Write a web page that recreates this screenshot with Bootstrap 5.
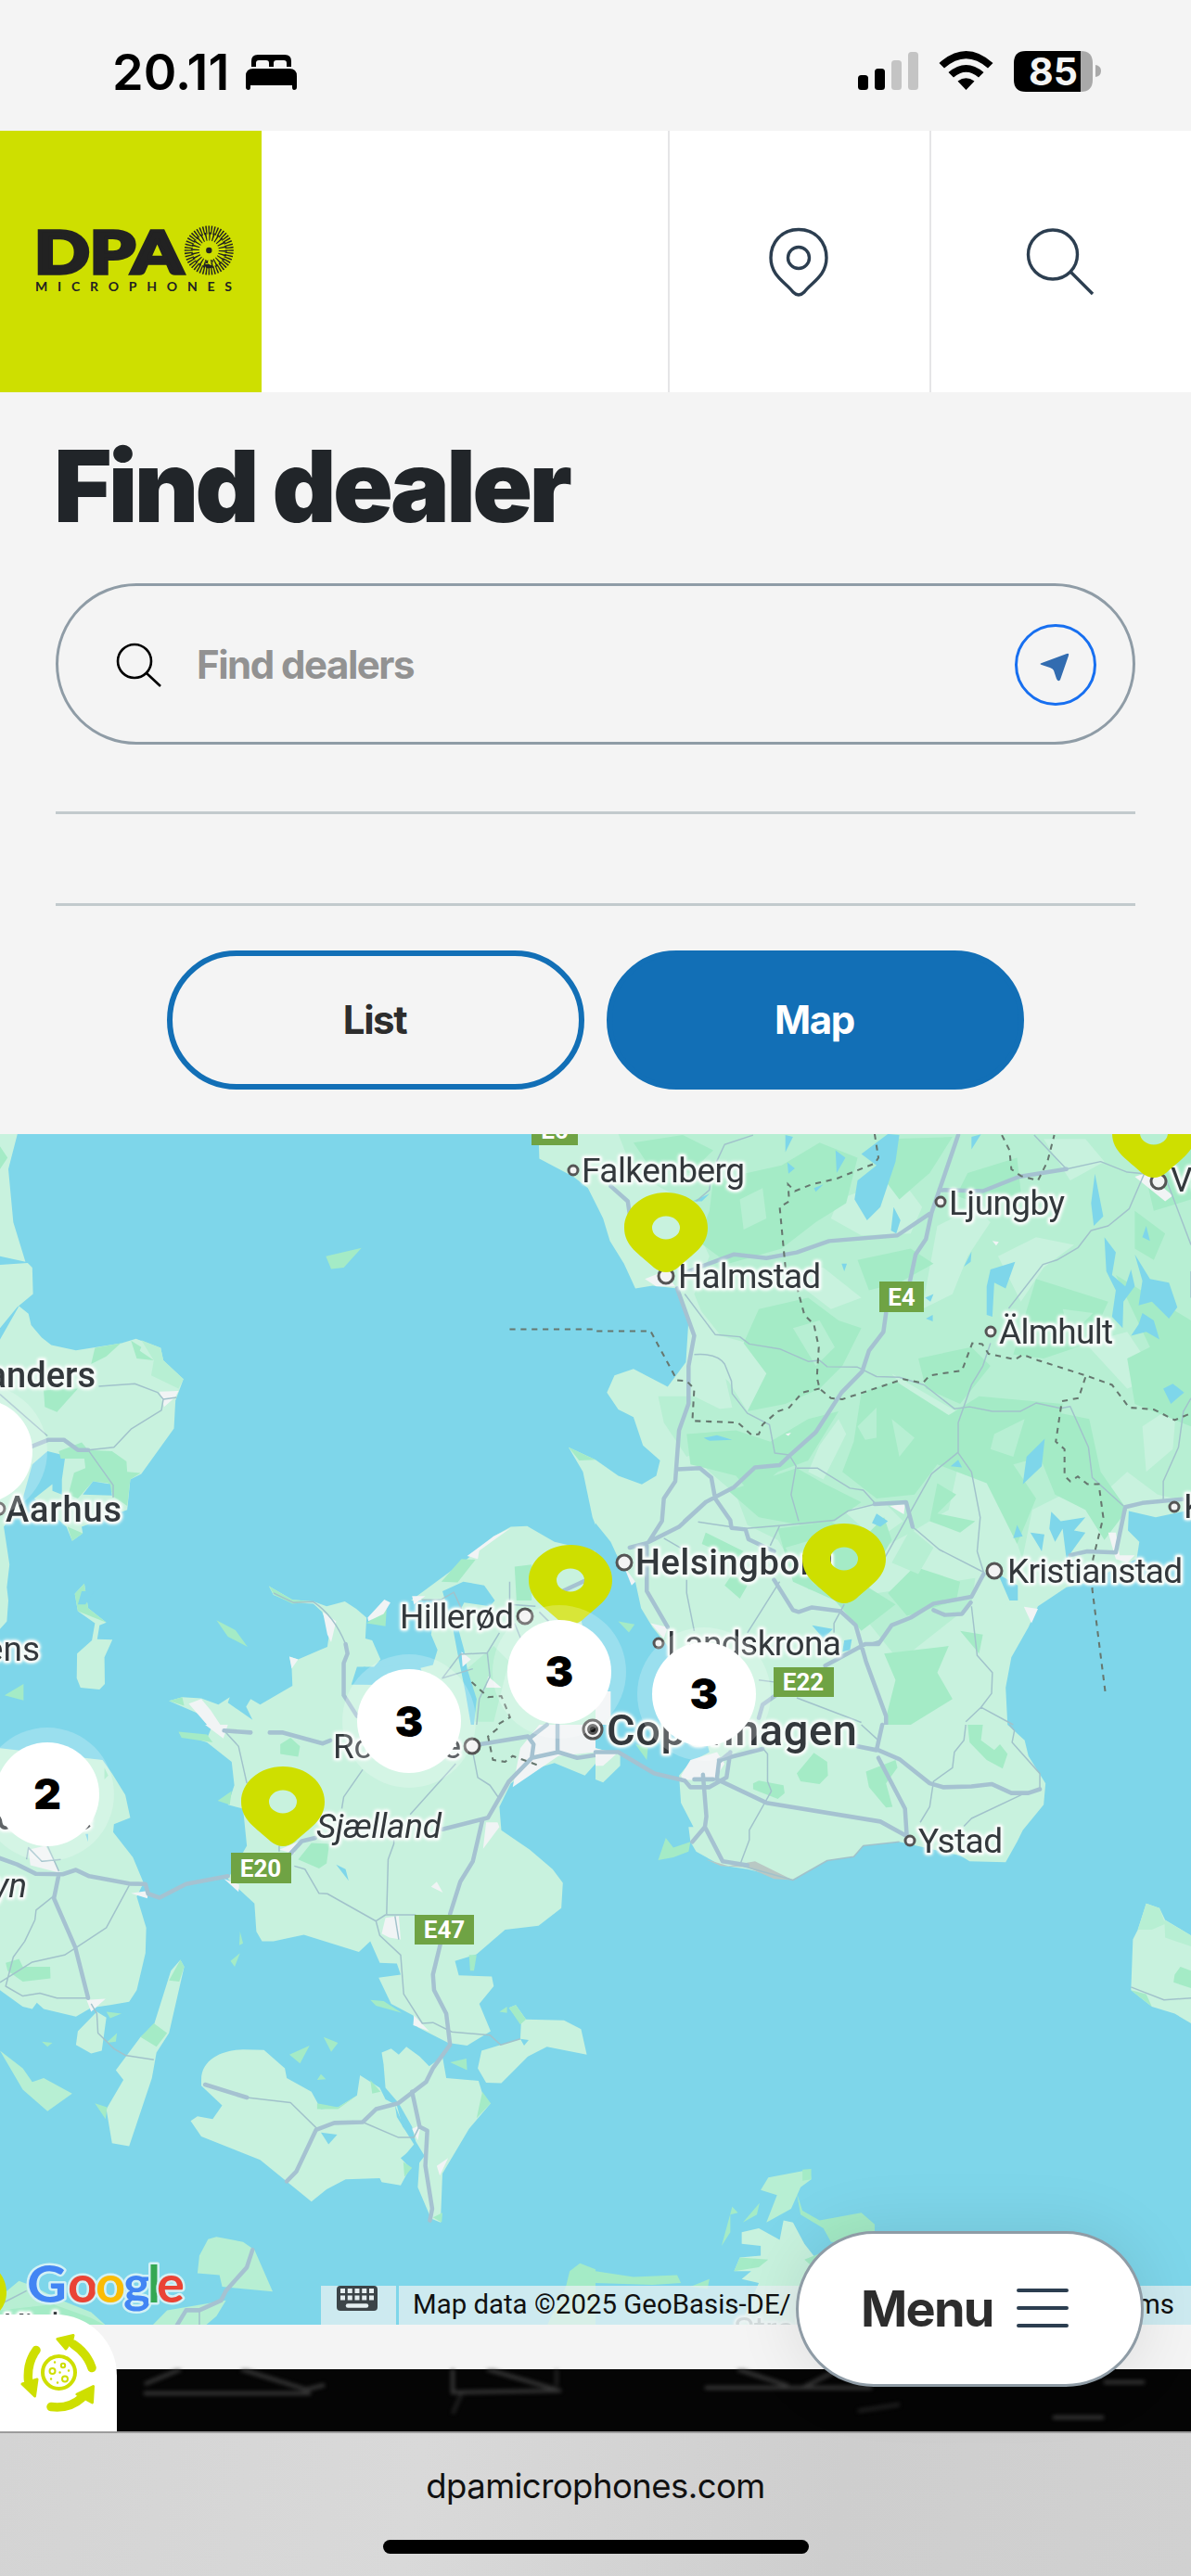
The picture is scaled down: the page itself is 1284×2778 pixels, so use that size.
<!DOCTYPE html>
<html lang="en">
<head>
<meta charset="utf-8">
<meta name="viewport" content="width=device-width, initial-scale=1">
<title>Find dealer</title>
<link href="https://cdn.jsdelivr.net/npm/bootstrap@5.3.0/dist/css/bootstrap.min.css" rel="stylesheet">
<style>
body{font-family:Inter,"Liberation Sans",sans-serif;background:#f4f4f4;width:1284px;overflow-x:hidden}
.screen{height:2778px;overflow:hidden}
.status{height:141px;padding:14px 96px 0 121px;color:#000}
.clock{font-size:54px;font-weight:600;letter-spacing:.1px;line-height:1}
.site-head{height:282px;background:#fff}
.brand{width:282px;background:#cedf00}
.head-cell{width:282px;border:0;border-left:2px solid #e5e5e7;background:#fff}
.dealer{height:800px;padding:0 60px}
.dealer h1{font-size:107px;font-weight:900;line-height:1;letter-spacing:-3.7px;color:#212529;margin:48px 0 0 -2px;height:158px}
.find-box{height:174px;border:3px solid #8f9ca6;padding:2px 39px 0 61px}
.find-box input{border:0;background:none;outline:0;font-size:42px;font-weight:700;letter-spacing:-1.5px;padding:0 0 2px;margin-left:38px;color:#333}
.find-box input::placeholder{color:#929292;opacity:1}
.locate{width:88px;height:88px;border:3px solid #176ff0;background:none}
.rule{height:3px;background:#c2cacd}
.toggle-btn{width:450px;height:150px;border:6px solid #126fb6;font-size:42px;font-weight:700;letter-spacing:-1.4px;color:#2d2d2d;padding:0 2px 2px 0}
.toggle-btn.on{background:#126fb6;color:#fff}
.map-wrap{height:1284px;background:#7ed6ea}
.map-wrap>svg{display:block}
.credit{left:346px;right:0;bottom:0;height:42px;font:29.4px/40px Roboto,sans-serif;color:#111}
.credit>div{background:rgba(232,240,242,.75)}
.menu-pill{left:858px;top:2406px;width:375px;height:168px;background:#fff;border:3px solid #8f9ca6;box-shadow:0 0 70px rgba(0,0,0,.1);padding:0 78px 2px 67px}
.menu-pill span{font-size:54px;font-weight:700;letter-spacing:-1.8px;color:#2d2d2d}
.recycle{left:0;top:2496px;width:126px;height:126px;background:#fff;border-top-right-radius:66px}
.gap-strip{height:48px}
.stage{height:67px;background:#050505}
.stage svg{display:block}
.browser-bar{height:156px;border-top:2px solid #9c9c9c;background:linear-gradient(100deg,#d4d4d4,#d9d9d9 35%,#cecece 70%,#d1d1d1)}
.browser-bar span{font-size:36.5px;line-height:46px;color:#111;margin-top:34px;letter-spacing:-.55px}
.home-bar{width:459px;height:15px;background:#000;margin-top:35px}
.land{fill:#c8f2de}.mid{fill:#b7efd3}.wood{fill:#a4ebc6}.lake{fill:#7ed6ea}.town{fill:#f1f4f5}
.hw{fill:none;stroke:#a5c2d1;stroke-width:11;stroke-linejoin:round;stroke-linecap:round}
.rd{fill:none;stroke:#a1c2cb;stroke-width:3.6;stroke-linejoin:round}
.bd{fill:none;stroke:#66776f;stroke-width:5;stroke-dasharray:15 14}
.lb{filter:drop-shadow(0 0 1.5px #f5fbf8) drop-shadow(0 0 1.5px #f5fbf8)}
.lb text{font-family:Roboto,sans-serif;font-size:37px;fill:#33383c;stroke:#f5fbf8;stroke-width:4px;paint-order:stroke;stroke-linejoin:round}
.lb .city{font-weight:500;font-size:38px}
.dots circle{fill:#f3f3f3;stroke:#555;stroke-width:3}
.shields rect{fill:#6fa344}
.shields text{font:700 26px Roboto,sans-serif;fill:#fff;text-anchor:middle}
.clusters text{font:900 46px Inter,sans-serif;fill:#000;text-anchor:middle}
</style>
</head>
<body>
<div class="screen position-relative d-flex flex-column">
  <header class="status d-flex align-items-center justify-content-between">
    <div class="d-flex align-items-center gap-3">
      <span class="clock">20.11</span>
      <svg width="56" height="38" viewBox="0 0 56 38" style="margin-left:2px"><path d="M6 13V7Q6 0 13 0H42Q49 0 49 7V13H44V9Q44 6 41 6H33Q30 6 30 9V13H25V9Q25 6 22 6H14Q11 6 11 9V13ZM8 15H47Q55 15 55 23V35Q55 38 52 38 50 38 50 35V33H5V35Q5 38 3 38 0 38 0 35V23Q0 15 8 15Z"/></svg>
    </div>
    <svg width="264" height="46" viewBox="924 54 264 46">
      <rect x="925" y="80" width="11" height="16" rx="3.500"/><rect x="943" y="73" width="11" height="23" rx="3.500"/>
      <rect x="961" y="64" width="11" height="32" rx="3.500" fill="#c4c4c4"/><rect x="979" y="55" width="11" height="41" rx="3.500" fill="#c4c4c4"/>
      <path d="M1012.500 67Q1041.500 41 1070.500 67L1065 72.500Q1041.500 52 1018 72.500ZM1022.500 77Q1041.500 61 1060.500 77L1055 82.500Q1041.500 71 1028 82.500ZM1032.500 86.500Q1041.500 80 1050.500 86.500L1041.500 96Z"/>
      <path d="M1106 54H1165V98H1106Q1093 98 1093 85V67Q1093 54 1106 54Z"/><path d="M1165 54Q1178 54 1178 67V85Q1178 98 1165 98Z" fill="#a9a9a9"/><path d="M1181 69Q1187 70 1187 75.500 1187 81 1181 82Z" fill="#a9a9a9"/>
      <text x="1135.500" y="91" text-anchor="middle" font-family="Inter,sans-serif" font-size="41" font-weight="700" fill="#f4f4f4">85</text>
    </svg>
  </header>

  <nav class="site-head d-flex">
    <a class="brand d-block" href="#">
      <svg width="282" height="282" viewBox="0 141 282 282" fill="#222">
        <text x="37" y="294.500" font-family="Lato,sans-serif" font-weight="900" font-size="63" textLength="160" lengthAdjust="spacingAndGlyphs" stroke="#222" stroke-width="3.600">DPA</text>
        <text x="38" y="314" font-family="Lato,sans-serif" font-weight="700" font-size="14" textLength="212">MICROPHONES</text>
        <circle cx="225.300" cy="270" r="3.200"/>
        <g fill="none" stroke="#222"><circle cx="225.300" cy="270" r="15" stroke-width="9" pathLength="24" stroke-dasharray=".36 .64"/><circle cx="225.300" cy="270" r="22" stroke-width="9" pathLength="48" stroke-dasharray=".48 .52" stroke-dashoffset=".25"/></g>
      </svg>
    </a>
    <div class="flex-grow-1"></div>
    <button class="head-cell p-0" aria-label="Find dealer"><svg width="280" height="282" viewBox="722 141 280 282" fill="none" stroke="#2c3e50" stroke-width="3.400"><path d="M861 247.500C842 247.500 831 262 831 278 831 298 848 305 855 315Q861 321 867 315C874 305 891 298 891 278 891 262 880 247.500 861 247.500Z"/><circle cx="861" cy="278" r="11.500"/></svg></button>
    <button class="head-cell p-0" aria-label="Search"><svg width="280" height="282" viewBox="1004 141 280 282" fill="none" stroke="#2c3e50" stroke-width="3.400"><circle cx="1135" cy="274.500" r="26.500"/><path d="M1154 293L1178 317"/></svg></button>
  </nav>

  <main>
    <section class="dealer d-flex flex-column">
      <h1>Find dealer</h1>
      <form class="find-box rounded-pill d-flex align-items-center">
        <svg width="50" height="50" viewBox="124 693 50 50" fill="none" stroke="#000" stroke-width="2.600"><circle cx="145" cy="714" r="18"/><path d="M158 727L173 741"/></svg>
        <input class="flex-grow-1" type="text" placeholder="Find dealers">
        <button type="button" class="locate rounded-circle p-0 flex-shrink-0" aria-label="Use my location"><svg width="82" height="82" viewBox="1097 676 82 82"><path d="M1123 715L1150 705Q1153 704 1152 707L1143 733Q1141 736 1139 732L1136 723Q1135 721 1132 720L1123 717Q1120 716 1123 715Z" fill="#326cb0"/></svg></button>
      </form>
      <div class="rule" style="margin-top:72px"></div>
      <div class="rule" style="margin-top:96px"></div>
      <div class="d-flex justify-content-center gap-4" style="margin-top:48px">
        <button class="toggle-btn rounded-pill bg-transparent">List</button>
        <button class="toggle-btn on rounded-pill">Map</button>
      </div>
    </section>

    <section class="map-wrap position-relative">
      <svg width="1284" height="1284" viewBox="0 0 1284 1284">
        <!-- north-west: Jutland coast, Djursland, north Zealand -->
        <g transform="translate(0,-3) scale(.40944,.40816)">
          <path class="land" d="M0 7H46L22 100 35 240 67 345 0 330ZM0 353L73 348 85 360 87 430 45 465 0 520ZM0 550L50 462 75 482 82 512 110 545 135 565 200 579 320 560 358 548 423 572 430 605 483 655 462 712 458 785 372 905 343 920 335 1000 215 1045 218 1062 190 1082 175 1045 90 970 138 932 138 950 163 960V920L172 857 125 845 85 880 60 970 0 985ZM0 960L60 975 10 1045 25 1145 18 1205 22 1240 18 1295 0 1315ZM222 1195L197 1222 205 1268 250 1300 242 1345 203 1380 202 1445 212 1470 262 1475 276 1460 275 1390 296 1343 256 1342 262 1305 280 1298 232 1260ZM1418 7H1568V190L1548 150 1510 120 1420 72ZM1497 835L1568 868V1040L1560 1020 1535 900Z"/>
          <path class="land" d="M560 1568L525 1540 445 1505 480 1495 530 1498 575 1515 605 1495 600 1510 665 1555 648 1520 660 1500 685 1515 770 1465 768 1415 762 1388 785 1395 862 1362 868 1320 848 1270 825 1248 770 1245 720 1225 708 1202 770 1238 825 1242 860 1255 908 1242 938 1262 965 1285 962 1340 980 1345 1002 1395 985 1415 958 1415 930 1460 985 1462 1100 1420 1140 1410 1152 1370 1135 1330 1150 1240H1082L1230 1130 1300 1070 1345 1045 1388 1043 1460 1085 1568 1110V1150L1530 1290 1560 1420 1570 1520V1568Z"/>
          <path class="wood" d="M858 330L952 308 905 360 872 364ZM570 1292L620 1318 652 1362 600 1335ZM12 1490L62 1460V1504ZM708 1202L770 1238 830 1243 770 1248 722 1225ZM222 1195L197 1222 205 1268 280 1298 232 1260ZM0 40L20 70 0 100ZM250 572L318 560 280 595 240 615ZM345 553L372 570 368 580 405 605 360 600ZM115 685L205 680 150 742 118 728ZM155 845L215 822 232 842 295 845 333 872 335 900 370 903 343 920 335 990 298 965 285 930 245 925 205 970 180 960 195 902 225 890 222 865 160 865ZM178 1045L218 1062 190 1082ZM445 1505L480 1495 485 1518ZM1162 1190L1215 1130 1252 1132 1205 1192ZM1355 1150L1400 1145V1240H1360ZM1497 835L1568 868 1525 870ZM965 1300L1018 1260 1015 1308Z"/>
          <path class="mid" d="M372 552L423 572 430 605 483 655 470 680 398 645 405 605ZM1110 1470H1150V1540H1110ZM1230 1420L1300 1360 1340 1400 1300 1560H1250Z"/>
          <path class="lake" d="M1165 1215L1220 1190 1275 1200 1303 1240 1290 1255 1222 1245 1200 1290 1222 1370 1230 1420 1255 1500 1248 1568H1240L1225 1480 1205 1380 1190 1300ZM940 1415L958 1415 985 1420 1100 1400 1110 1425 985 1462H925ZM205 1250L215 1215 248 1215 225 1250ZM218 960L245 925 290 932 295 962Z"/>
          <path class="town" d="M420 688L470 686 462 702 432 728ZM850 1270L885 1295 872 1350 862 1330ZM968 1285L1012 1237 1028 1245 1010 1275 970 1294ZM1230 1122L1300 1070 1345 1048 1262 1108 1258 1130ZM762 1388L785 1395 768 1420ZM497 1512L530 1500 555 1530 580 1568H545ZM1085 1228H1120L1090 1250ZM1215 1375L1240 1395 1218 1415ZM1285 1440L1320 1470H1280Z"/>
          <path class="rd" d="M0 695L125 805M260 674L355 667 415 690 430 708 465 703M430 708L425 737 345 787 300 835 232 842 298 935V968M720 1220L772 1245 825 1243Q880 1280 910 1355M1110 1238H1160L1195 1218 1215 1262M1342 1190V1250L1410 1255M1315 1325L1283 1378 1212 1382 1165 1445 1245 1420M1283 1378L1290 1440 1262 1500 1255 1568M1355 1300L1375 1350M1420 1270L1450 1300"/>
          <path class="hw" d="M85 832L128 815H168L205 842H232M910 1355L915 1380 905 1405V1490L940 1545M1460 1225L1545 1185"/>
          <path class="bd" d="M1342 523H1568M1242 1455L1285 1495 1320 1492 1343 1548 1310 1568"/>
        </g>

        <!-- north-east: southern Sweden -->
        <g transform="translate(642,-3) scale(.40944,.40816)">
          <path class="land" d="M0 7H1568V1000L1475 1020 1404 1003 1402 1055 1432 1085 1425 1130 1380 1150 1300 1190 1240 1205 1165 1255 1140 1310 1095 1390 1080 1470 1085 1568H280L270 1450 250 1400 190 1360 150 1310 120 1260 105 1190 70 1150 40 1085 0 1035V868L60 910 122 933 160 910 170 870 125 830 100 755 60 735 30 690 50 645 100 628 190 675 238 610 245 500 215 415 150 408 105 415 75 350 38 290 20 230 0 190Z"/>
          <path class="mid" d="M60 7H1568V980L1480 960 1400 900 1290 1000 1230 960 1150 1000 1120 1150 1040 1130 1020 900 960 860 930 1000 830 1060 700 1130 640 1230 560 1210 480 1080 400 1040 370 960 300 900 240 830 260 740 360 730 330 600 260 430 300 330 230 180 100 110ZM165 700L260 700 340 740 400 790 240 860 180 770ZM680 1230L1000 1180 990 1250 800 1400 720 1300Z"/>
          <path class="land" d="M250 440L330 540 420 565 480 700 400 740 350 660 260 590ZM640 180L800 120 860 200 830 270 700 275 620 230ZM900 250L1000 200 1040 240 980 330 940 430 860 470ZM1060 330L1160 280 1260 300 1180 360 1120 450ZM590 830L640 760 660 800 600 920 560 900ZM980 870L1060 930 1130 1150 1160 1160 1080 1250 1000 1250 1020 1100ZM780 640L950 740 920 790 860 740ZM1180 20L1290 20 1340 80 1250 130ZM490 370L600 360 700 440 620 470ZM1290 560L1400 530 1480 650 1400 680ZM1440 780L1530 720 1520 840 1450 900ZM650 1000L760 980 810 1030 740 1080Z"/>
          <path class="wood" d="M100 30L230 10 310 50 250 110 140 90ZM310 130L490 90 590 30 690 70 660 190 580 240 490 310 350 350 270 290 300 210ZM430 470L560 440 640 500 700 520 650 620 590 680 500 720 400 740 450 640 390 560ZM690 340L830 310 890 350 800 400 720 420ZM770 20L940 15 880 110 800 180 740 100ZM980 110L1110 70 1120 160 1030 200 950 170ZM700 690L790 660 930 750 1010 700 1230 720 1210 850 1100 880 1160 970 1110 1090 1030 930 900 880 840 960 740 970 650 900 680 820ZM850 600L990 570 1040 620 960 720 870 680ZM1160 390L1350 450 1300 560 1180 600 1100 590ZM1430 40L1568 20V180L1470 210ZM1370 380L1568 500V780L1420 720 1400 600 1460 570ZM240 800L370 790 460 820 560 760 640 740 560 870 480 900 410 960 370 910 250 880ZM350 950L530 890 600 930 700 980 630 1030 540 1040 430 1020ZM480 1050L620 1030 700 1080 760 1020 780 1080 710 1200 790 1250 700 1320 630 1240 520 1190ZM900 930L950 960 900 1010 1000 1030 960 1060 880 1030ZM840 1150L960 1190 950 1240 820 1280 770 1220ZM760 1380L930 1360 900 1430 940 1500 830 1568H760L790 1450ZM1200 740L1300 760 1330 900 1400 1000 1340 1080 1290 1000 1210 960 1170 860ZM960 1320L1020 1330 1010 1380ZM290 1060L390 1110 370 1130 280 1090ZM360 1170L400 1200 380 1235 340 1200ZM1420 210L1500 270 1470 340 1420 310Z"/>
          <path class="mid" d="M520 520L590 500 630 570 580 620ZM690 780L740 730 740 810 710 815ZM780 760L840 810 800 860ZM1050 800L1130 760 1100 860 1040 840ZM830 1050L890 1100 850 1170 780 1140ZM500 1100L570 1080 600 1160 540 1170ZM1230 470L1310 480 1250 540ZM380 180L440 150 450 230 390 260Z"/>
          <path class="lake" d="M700 60L770 7 800 10 790 80 750 200 715 235 682 180 690 130 740 90ZM500 10L520 15 500 55ZM632 50L658 70 635 110ZM505 82L525 98 508 112ZM785 200L803 235 792 270 778 262ZM990 15L1015 8 990 48ZM1315 112L1337 225 1312 250 1305 190ZM1340 280L1370 320 1360 380 1395 410 1410 365 1420 410 1390 450 1388 520 1360 490 1370 420 1345 370ZM1420 325L1460 390 1510 400 1532 465 1510 495 1465 450 1430 460 1440 395ZM1440 480L1470 500 1485 550 1450 530 1410 540 1430 510ZM1450 250L1460 290 1440 280ZM1040 365L1105 345 1080 415 1050 400 1045 490 1030 485 1030 410ZM990 318L988 345 970 358ZM868 440L890 430 882 450ZM870 495L888 485V502ZM648 350L662 350 655 370ZM285 810L320 803 360 815 300 818ZM1135 860L1183 812 1175 885 1125 933ZM1495 680L1520 667 1550 690 1515 720ZM935 885L955 868 965 888ZM740 1010L770 1030 750 1045 728 1035ZM1200 1005L1225 1030 1290 1020 1260 1055 1290 1060 1240 1130 1230 1050 1210 1085 1195 1050ZM1110 1040L1125 1070 1100 1075ZM1145 1060L1182 1065 1175 1110ZM1060 1170L1112 1200V1240L1090 1240ZM570 1305L625 1315 600 1340ZM655 1345L675 1342 670 1370 650 1375ZM575 150L600 140 580 160ZM255 185L300 165 280 185Z"/>
          <path class="wood" d="M60 1295L103 1303 88 1324Z"/>
          <path class="town" d="M130 390L180 370 210 410H160ZM1420 120L1450 110 1520 170 1500 185ZM1350 1060L1370 1060 1380 1120 1420 1120 1400 1140 1370 1130ZM1128 1256L1165 1262 1148 1300ZM775 990L815 985 812 1012ZM145 1300L190 1310 180 1340ZM1045 290L1062 292 1055 302ZM500 800L515 796 508 805ZM0 1480H40V1568H0ZM75 1150L105 1190 95 1200Z"/>
          <path class="rd" d="M265 185L300 155 305 110 340 35 415 10M1155 10L1240 100 1330 80 1400 108 1445 112 1405 205 1350 250 1305 262 1270 308 1215 340 1178 352 1088 468M1500 120L1568 300M1040 560L1020 620 990 670 955 770V848L885 905 760 1130M1568 705L1548 740 1535 835 1495 925V975M1568 370V440M235 430L315 537 380 543 405 562 485 575 560 608 590 605 610 622 690 623 740 648 800 650 865 670 945 733 985 728 1045 740H1118L1160 718 1225 732 1250 727 1298 835 1308 915 1390 990M260 590Q320 585 340 615L358 660 360 693 400 745 458 775 472 850 510 855 528 885 515 960 535 1030M530 890H585L670 943 705 948 738 985 665 1003 628 1028 485 1042 390 1050M485 1042L460 1095M485 1190L400 1325M655 1250L628 1300V1325M240 1185V1220L260 1320M955 850L990 900 1013 1020 1005 1110 1022 1165 905 1105 835 1045M990 1255L1005 1385 1045 1430 1043 1485 1015 1522 1100 1568M1015 1522L975 1560M430 1450L470 1455M530 1497L700 1562M270 1032L390 1050M180 1075L240 1110M705 1360L750 1345"/>
          <path class="hw" d="M955 10L885 215 870 285 843 325 825 410M765 480L758 530 720 580 702 635 648 690 580 795 510 858 485 882 420 888 365 940 290 980 220 1045 135 1088 90 1100M40 145L85 185 90 220M245 370L365 325 450 335 530 320 615 290 795 275 880 218M905 155L1020 158 1115 120 1240 100M215 415L260 540 245 620V720L220 790 210 925 180 970 175 1030 140 1085M215 893L275 890 305 915 315 970 355 1028 358 1048 395 1052 403 1078 470 1110M235 1030L290 980M735 985L818 980 835 1045M1545 972L1440 982 1395 993 1370 1113 1295 1110 1250 1120M1022 1170L990 1230 890 1248 830 1285 780 1305 745 1355 710 1355 605 1412M470 1185L520 1265 535 1270 570 1258 645 1268 685 1305 712 1400 765 1545V1568M890 1265L920 1278 965 1275 988 1245M135 1095V1215L190 1310M430 1550L440 1515 475 1490"/>
          <path class="bd" d="M735 7L745 70 735 85 635 125 570 140 525 158 507 140 510 185 485 200 500 360M530 410L550 485 575 510 588 570 583 650 590 680 620 705 650 708 810 655 862 665 880 645 965 632 992 560 1018 562 1035 588 1105 603 1125 590 1165 605 1290 645 1360 670 1405 730 1470 735 1525 763 1568 745M590 680L545 690 510 730 480 740 440 775 430 800 412 803 375 770 255 765 260 680 240 660 215 658 145 528H0M1290 650L1272 705 1228 713 1212 820 1235 840V910L1250 925 1270 912 1295 932H1325L1337 1020 1310 1130 1308 1210 1343 1487M1070 10L1090 50 1095 100 1120 118 1165 130 1190 80 1208 10"/>
        </g>

        <!-- south-west: Funen, Zealand, Lolland, Falster -->
        <g transform="translate(0,637) scale(.40944,.42092)">
          <path class="land" d="M0 60L270 90 295 125 330 180 343 238 300 255 298 275 350 340 378 405 360 440 385 520 383 585 360 680 340 710 290 718 240 725 200 748 115 728 97 712 85 728 60 722 0 680ZM255 735L280 750 268 835 240 842 200 820 205 785ZM475 602L485 620 445 790 412 840 400 905 340 1080 295 1072 280 985 325 910 305 885 370 800 405 770 450 630ZM470 22L545 35 560 0H1568V100L1540 130 1460 98 1400 115 1345 150 1315 210 1320 270 1395 320 1455 370 1482 405 1478 470 1418 515 1330 525 1255 588 1198 605 1208 642 1295 645 1300 670 1262 715 1292 785 1230 822 1180 815 1100 775 1088 745 1030 715 997 648 1055 640 1045 612 1000 610 975 555 945 582 800 538 720 555 690 555 675 530 670 458 600 395 650 310 640 215 600 205 617 155 610 95 545 45ZM1340 725L1358 718 1385 755 1485 757 1530 780 1545 845 1440 825 1390 850 1320 918 1280 917 1258 880 1268 835 1370 805 1372 765ZM530 910C530 850 600 832 640 832L695 833 750 880 755 905 820 940 845 985 890 980 940 950 948 898 1000 930 1015 960 1045 975 1060 1030 1100 1075 1055 1110 1080 1135 1055 1180 1005 1172 1000 1162 910 1165 860 1190 820 1222 685 1115 530 1055 502 1015 520 1003 560 1010 585 975 530 925ZM1010 870L1005 840 1030 830 1050 845 1070 825 1105 850 1130 875 1165 850 1175 905 1260 912 1275 960 1292 970 1235 1035 1165 1150 1160 1275 1135 1265 1100 1185 1105 1110 1085 1030 1050 970 1015 930Z"/>
          <path class="mid" d="M0 835L60 880 85 915 115 905 190 945 125 990 60 935ZM520 1405L525 1360 548 1318 570 1312 640 1325 670 1345 718 1452 640 1445 585 1440 578 1410ZM0 1465L50 1425 90 1440 150 1470 240 1505 280 1540H0ZM400 1540L440 1500 595 1475 570 1515 540 1540Z"/>
          <path class="wood" d="M470 18L545 25 560 45 478 33ZM738 50L765 33 790 55 785 82 738 75ZM785 345L820 303 867 305 860 355 840 368ZM573 195L610 170 605 205ZM15 610L50 600 60 620 132 620 133 650 60 658 20 630ZM475 602L485 620 472 658 445 655ZM370 800L405 765 440 790 412 825ZM632 530L640 560 630 565ZM607 605L632 585 618 620ZM975 705L1010 708 1058 738 990 720ZM852 800L890 815 872 838ZM762 845L815 822 790 868ZM835 910L845 895 858 908ZM1185 865L1228 855 1230 885ZM1235 590L1255 590 1248 630H1238ZM275 110L285 130 275 140ZM280 735L320 740 290 752ZM280 815L308 790 305 812ZM110 812L138 815 125 825ZM250 970L282 980 278 1010ZM1340 725L1358 718 1385 755 1370 768ZM1315 735L1335 722V738ZM1270 940L1292 970 1255 1008ZM1062 1120L1085 1135 1065 1158ZM975 910L1002 940 980 945ZM835 970L890 980 940 950 890 985H835ZM1140 1262L1163 1275 1165 1250ZM1490 1440L1500 1400 1527 1380 1568 1395V1540H1440ZM0 1500L140 1485 240 1520 280 1540H0Z"/>
          <path class="lake" d="M885 358L910 370 918 400ZM845 1045L888 1050 865 1075ZM1370 805L1392 808 1380 822ZM1040 975L1055 1010 1090 1060 1118 1105 1090 1140 1060 1110 1090 1075 1045 1005ZM225 280H232V300ZM1515 0H1568V30Z"/>
          <path class="town" d="M540 0H600L588 35ZM75 320L120 310 160 380 80 360ZM735 320L785 300 775 330ZM590 395L630 410 628 428ZM345 432L390 425 388 445ZM228 705L278 702 240 735ZM1310 250L1315 262 1272 318 1280 250ZM1135 415L1150 402 1166 430ZM1005 535L1015 495 1050 490 1055 550 1025 545ZM1090 745L1130 785 1088 770ZM1150 1130L1180 1110 1158 1155ZM1085 1035L1108 1025 1100 1065ZM1370 60L1420 0H1568V70L1470 80 1350 160Z"/>
          <path class="rd" d="M70 345L75 315 110 350 160 345M125 310L155 375M140 440L95 475 92 500 65 555 35 595 15 670 60 695 105 688 150 700H232M340 412L280 520 205 568 170 590 85 608 0 660M240 715L255 740 258 790 300 830 330 847 405 858M590 15L628 55 650 150M955 115L905 185 900 215M735 325V310M775 362L803 370 840 432 862 433 990 503 1015 487H1095M1018 485L1022 345 1037 305V270M1245 70L1258 135 1290 155 1315 190M1200 100L1080 230M990 503L1000 540 1055 590 1063 690 1112 765 1140 763 1190 787 1290 795 1318 820 1370 805M650 955L765 968 835 1035M955 1018L1048 1057H1090L1105 1028M525 1500V1540M10 1480L70 1450M1050 550L1040 490"/>
          <path class="hw" d="M0 342L45 358 95 382 165 383 200 372 235 388 340 407 383 408 390 433 420 443 490 408 600 388M155 383L142 445 198 570 232 700M590 15L660 20M710 20H745L850 48 870 40M765 330L795 298 830 290M1165 268L1285 238 1340 145 1400 85M1270 245L1245 350 1212 402 1185 485M1160 560L1140 640 1143 680 1175 740 1185 820 1140 880 1122 915 1048 970 990 985 955 1018 880 1020 832 1038 780 1145 755 1170M540 922L650 955M1085 940L1105 1030 1125 1040 1120 1130 1138 1240 1132 1270M665 1345L650 1390 595 1450 582 1475 525 1500H490L465 1540M1265 50L1390 30 1405 50 1400 85M1400 85L1470 70 1520 85 1568 78M1440 0L1400 30M1468 0V70"/>
          <path class="bd" d="M1310 10L1285 30 1298 90 1330 95 1350 80 1420 105"/>
        </g>

        <!-- south-east: Skåne, Bornholm, Rügen -->
        <g transform="translate(642,637) scale(.40944,.42092)">
          <path class="land" d="M280 0H1085L1130 40 1140 80 1185 150 1180 205 1125 270 1110 300 1080 352 985 350 960 335 800 300 705 310 680 338 610 348 520 398 400 370 330 360 265 325 250 300 245 262 258 262 225 200 220 130 250 95 300 70ZM0 60L65 75V105L20 148 0 140ZM1450 458L1485 470 1500 500 1568 540V765L1525 740 1465 722 1410 680 1415 550 1428 525ZM385 1300L430 1290 485 1320 495 1270 520 1275 550 1330 590 1380V1540H380L430 1430 385 1420 410 1400 365 1400 380 1365 435 1360V1335L385 1330Z"/>
          <path class="mid" d="M435 1192L455 1160 565 1140 568 1165 540 1185 515 1240 450 1275 478 1205ZM1450 458L1485 470 1500 510 1465 525 1428 525ZM1498 500L1568 540V568L1500 545Z"/>
          <path class="wood" d="M165 347L185 290 205 315 250 300 245 325 205 340ZM530 125L575 72 610 95 612 130 590 152 540 145ZM712 120L790 90 795 110 765 150 782 210 765 212 720 160ZM980 0H1020L1015 40 1050 65 1065 50 1085 75 1072 112 1030 90 985 45ZM415 150L430 143 495 155 498 175 480 190 415 165ZM105 50L138 60 135 90ZM530 1200L545 1245 590 1270 700 1250 735 1280V1330L620 1325 600 1290 540 1255ZM360 1235L375 1250 355 1255V1300L332 1335ZM388 1275L432 1225 425 1255ZM545 1140L568 1138V1165L545 1168ZM380 1365L455 1370 430 1390 365 1400ZM0 1400L100 1415 215 1410 225 1430 150 1435 0 1430ZM250 1440L300 1420 295 1445ZM1525 640L1540 620 1568 630V675L1522 660ZM1410 680L1465 722 1450 690ZM550 1370L590 1355 585 1400Z"/>
          <path class="town" d="M225 130L250 90 320 70 340 100 310 145 230 140ZM0 60L55 75 20 105 0 105Z"/>
          <path d="M290 345L350 362 420 350 520 398 470 395 400 365 330 362Z" fill="#b9c8c4"/>
          <path class="rd" d="M440 60L453 75V145L463 170 405 270V295L380 360 520 398 610 348 680 338 705 310 800 300M975 0L970 40 945 70 940 110 890 145 880 210 855 250M1090 0L1103 15 1097 45 1170 125V165M1125 178L990 240 970 260M700 0L745 40M1410 672L1497 705 1568 700"/>
          <path class="hw" d="M60 70L155 125 235 143 250 160H300L345 135 355 70M320 135L325 95 350 75M320 140L450 200 750 248 828 290M325 90L440 62M260 140H310M283 128L292 235 288 262 255 300M288 262L335 350 400 360M690 55L740 65 755 0M745 65L800 88 880 150 915 160 990 158 1043 152 1095 175 1140 175 1170 165M745 85L815 215 820 290M0 70H60"/>
        </g>

        <g class="dots">
          <circle cx="618" cy="39" r="5"/><circle cx="718" cy="153" r="8"/><circle cx="1014" cy="73" r="5"/><circle cx="1068" cy="213" r="5"/><circle cx="1249" cy="51" r="8"/><circle cx="1266" cy="402" r="5"/><circle cx="673" cy="462" r="8"/><circle cx="1072" cy="471" r="8"/><circle cx="710" cy="549" r="5"/><circle cx="566" cy="520" r="8"/><circle cx="509" cy="660" r="8"/><circle cx="981" cy="762" r="5"/><circle cx="-1" cy="404" r="6"/>
          <circle cx="639" cy="642" r="10" stroke="#333"/><circle cx="639" cy="642" r="4.500" style="fill:#111"/>
        </g>
        <g class="lb">
          <text x="627" y="52" textLength="176">Falkenberg</text><text x="731" y="166" textLength="154">Halmstad</text><text x="1023" y="87" textLength="125">Ljungby</text><text x="1077" y="226" textLength="123">Älmhult</text><text x="1262" y="62">Växjö</text><text x="1276" y="414">Karlshamn</text>
          <text class="city" x="685" y="475" textLength="213">Helsingborg</text><text x="1086" y="484" textLength="189">Kristianstad</text><text x="719" y="562" textLength="188">Landskrona</text><text x="431" y="533" textLength="123">Hillerød</text><text x="359" y="673" textLength="138">Roskilde</text>
          <text class="city" x="654" y="659" textLength="270" style="font-size:47px">Copenhagen</text><text x="990" y="775" textLength="91">Ystad</text>
          <text x="341" y="759" textLength="135" font-style="italic">Sjælland</text><text x="29" y="823" text-anchor="end" font-style="italic">Fyn</text><text class="city" x="103" y="273" text-anchor="end">Randers</text><text class="city" x="6" y="418" textLength="125">Aarhus</text><text x="43" y="568" text-anchor="end">Horsens</text><text class="city" x="99" y="750" text-anchor="end">Odense</text><text x="64" y="1298" text-anchor="end">Kiel</text><text x="791" y="1302" opacity=".5">Stralsund</text>
        </g>
        <g class="shields">
          <rect x="573" y="-20" width="50" height="32"/><text x="598" y="5">E6</text><rect x="948" y="159" width="48" height="33"/><text x="972" y="185">E4</text><rect x="834" y="575" width="65" height="32"/><text x="866" y="600">E22</text><rect x="249" y="775" width="65" height="33"/><text x="281" y="801">E20</text><rect x="447" y="842" width="64" height="32"/><text x="479" y="867">E47</text>
        </g>
        <defs><path id="pin" fill-rule="evenodd" d="M0 0C25 0 45 17 45 38 45 58 29 66 13 81Q0 91-13 81C-29 66-45 58-45 38-45 17-25 0 0 0ZM0 25.500A15 12.500 0 1 0 0 50.500A15 12.500 0 1 0 0 25.500Z"/></defs>
        <g fill="#cedf00"><use href="#pin" x="718" y="63"/><use href="#pin" x="910" y="420"/><use href="#pin" x="615" y="443"/><use href="#pin" x="1244" y="-39"/><use href="#pin" x="305" y="682"/><use href="#pin" x="-38" y="1211"/></g>
        <g class="clusters">
          <g fill="#fff" fill-opacity=".22"><circle cx="603" cy="580" r="72"/><circle cx="759" cy="604" r="72"/><circle cx="441" cy="633" r="72"/><circle cx="51" cy="712" r="72"/><circle cx="-21" cy="342" r="72"/></g>
          <g fill="#fff"><circle cx="603" cy="580" r="56"/><circle cx="759" cy="604" r="56"/><circle cx="441" cy="633" r="56"/><circle cx="51" cy="712" r="56"/><circle cx="-21" cy="342" r="56"/></g>
          <text x="603" y="596">3</text><text x="759" y="620">3</text><text x="441" y="650">3</text><text x="51" y="728">2</text>
        </g>
        <text y="1260" font-family="Lato,sans-serif" font-weight="700" font-size="56" stroke="#d3f1f5" stroke-width="5" paint-order="stroke" stroke-linejoin="round"><tspan x="29" fill="#4285f4" textLength="43" lengthAdjust="spacingAndGlyphs">G</tspan><tspan x="73" fill="#ea4335">o</tspan><tspan x="103" fill="#fbbc04">o</tspan><tspan x="133" fill="#4285f4">g</tspan><tspan x="159" fill="#34a853">l</tspan><tspan x="169" fill="#ea4335">e</tspan></text>
      </svg>
      <div class="credit position-absolute d-flex">
        <div style="width:81px;margin-right:3px"><svg class="d-block" width="81" height="42" viewBox="0 0 81 42"><rect x="17" y="0" width="44" height="27" rx="4" fill="#3c4448"/><path d="M21 5.500H57M21 13H57" stroke="#e6eff1" stroke-width="5" stroke-dasharray="5 2.750"/><path d="M29 21.500H49" stroke="#e6eff1" stroke-width="4.500" stroke-linecap="round"/></svg></div>
        <div class="flex-grow-1 d-flex justify-content-between" style="padding:0 18px 0 15px"><span>Map data ©2025 GeoBasis-DE/&ensp;BKG</span><span>Terms</span></div>
      </div>
    </section>
  </main>

  <div class="gap-strip"></div>
  <div class="stage"><svg width="1284" height="67" fill="none" stroke="#4a4a4a" stroke-width="4" style="filter:blur(2px)"><path d="M156 16L195 0M260 0L330 22 350 17M155 26H335M488 0V25L605 23M525 0L600 22M760 20H940M795 0L850 18M905 0L865 20M1190 14H1234M1135 52H1190" stroke-opacity=".75"/><path d="M498 25L488 48M925 45L970 38M600 0V18" stroke-opacity=".4"/></svg></div>
  <footer class="browser-bar d-flex flex-column align-items-center"><span>dpamicrophones.com</span><div class="home-bar rounded-pill flex-shrink-0"></div></footer>

  <a class="recycle position-absolute" href="#" aria-label="Recycling"><svg class="d-block" width="126" height="126" viewBox="0 2496 126 126" fill="none" stroke="#cedf00"><circle cx="63.500" cy="2558.500" r="17.500" stroke-width="4"/><g stroke-width="2"><circle cx="56.500" cy="2557" r="3"/><circle cx="68" cy="2551" r="2.200"/><circle cx="70" cy="2565.500" r="3"/></g><path stroke-width="2.400" stroke-linecap="round" d="M59 2547.500h.1M64.500 2558.500h.1M55 2565.500h.1M62 2569.500h.1M74 2556.500h.1"/><path stroke-width="9.500" stroke-linecap="round" d="M99 2553.500Q94 2538 79 2528M39 2534.500Q29 2548 30.500 2567M55 2595.500Q75 2598 88 2586"/><path fill="#cedf00" stroke-width="3" stroke-linejoin="round" d="M62 2522.500L79 2518.500 78 2523 71 2533ZM24 2571L40 2566 37.500 2584ZM100.500 2573.500L99.500 2591 83 2582Z"/></svg></a>
  <button class="menu-pill position-absolute rounded-pill d-flex align-items-center justify-content-between"><span>Menu</span><svg width="56" height="42" viewBox="0 0 56 42" stroke="#2c3e50" stroke-width="4" stroke-linecap="round"><path d="M2 2H54M2 21H54M2 40H54"/></svg></button>
</div>
<script src="https://cdn.jsdelivr.net/npm/bootstrap@5.3.0/dist/js/bootstrap.bundle.min.js"></script>
</body>
</html>
